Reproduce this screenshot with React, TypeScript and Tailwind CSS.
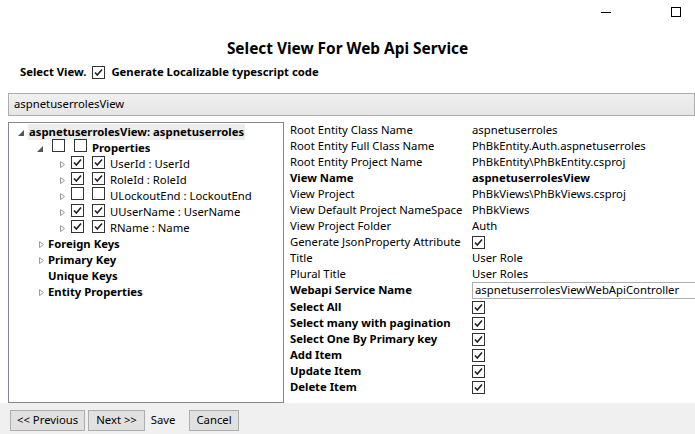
import React from 'react'

const font = { fontFamily: '"Segoe UI", "Noto Sans", sans-serif' }

function Check({ checked }: { checked: boolean }) {
  return (
    <span className="inline-flex w-[13px] h-[13px] border border-[#333] bg-white items-center justify-center shrink-0">
      {checked && (
        <svg width="11" height="11" viewBox="0 0 11 11">
          <path d="M2 5.5 L4.3 8 L9 2.5" fill="none" stroke="#222" strokeWidth="1.6" />
        </svg>
      )}
    </span>
  )
}

function Expander({ open }: { open?: boolean }) {
  return (
    <svg width="9" height="9" viewBox="0 0 9 9" className="shrink-0">
      {open ? (
        <polygon points="7,2 7,8 1,8" fill="#555" />
      ) : (
        <polygon points="2.5,1.5 6.5,4.5 2.5,7.5" fill="white" stroke="#9a9a9a" strokeWidth="1" />
      )}
    </svg>
  )
}

const children = [
  { name: 'UserId : UserId', on: true },
  { name: 'RoleId : RoleId', on: true },
  { name: 'ULockoutEnd : LockoutEnd', on: false },
  { name: 'UUserName : UserName', on: true },
  { name: 'RName : Name', on: true },
]

const props: { label: string; value?: string; bold?: boolean; check?: boolean }[] = [
  { label: 'Root Entity Class Name', value: 'aspnetuserroles' },
  { label: 'Root Entity Full Class Name', value: 'PhBkEntity.Auth.aspnetuserroles' },
  { label: 'Root Entity Project Name', value: 'PhBkEntity\\PhBkEntity.csproj' },
  { label: 'View Name', value: 'aspnetuserrolesView', bold: true },
  { label: 'View Project', value: 'PhBkViews\\PhBkViews.csproj' },
  { label: 'View Default Project NameSpace', value: 'PhBkViews' },
  { label: 'View Project Folder', value: 'Auth' },
  { label: 'Generate JsonProperty Attribute', check: true },
  { label: 'Title', value: 'User Role' },
  { label: 'Plural Title', value: 'User Roles' },
]

const actions = [
  'Select All',
  'Select many with pagination',
  'Select One By Primary key',
  'Add Item',
  'Update Item',
  'Delete Item',
]

export default function App() {
  return (
    <div style={font} className="w-[695px] h-[434px] bg-white text-[11.3px] text-black overflow-hidden flex flex-col">
      {/* window caption */}
      <div className="h-[28px] flex justify-end items-start shrink-0">
        <div className="w-[10px] h-[1px] bg-black mr-[60px] mt-[12px]" />
        <div className="w-[10px] h-[10px] border border-black mr-[14px] mt-[7px]" />
      </div>

      <div className="h-[40px] flex items-center justify-center font-bold text-[15.4px] shrink-0 pt-[1px]">
        Select View For Web Api Service
      </div>

      <div className="h-[24px] flex items-center gap-[6px] pl-[20px] font-bold shrink-0 mt-[-8px]">
        <span>Select View.</span>
        <Check checked />
        <span>Generate Localizable typescript code</span>
      </div>

      <div className="mt-[9px] ml-[8px] h-[23px] border border-[#acacac] bg-gradient-to-b from-[#f0f0f0] to-[#e5e5e5] flex items-center pl-[5px] shrink-0">
        aspnetuserrolesView
      </div>

      <div className="flex mt-[6px] h-[281px] shrink-0">
        {/* tree */}
        <div className="ml-[8px] w-[276px] border border-[#828790] pt-[1px] shrink-0">
          <div className="h-[16px] flex items-center pl-[8px]">
            <Expander open />
            <span className="ml-[2px] px-[1px] bg-[#ededed] font-bold leading-[16px]">aspnetuserrolesView: aspnetuserroles</span>
          </div>
          <div className="h-[16px] flex items-center pl-[27px]">
            <Expander open />
            <span className="ml-[7px]"><Check checked={false} /></span>
            <span className="ml-[9px]"><Check checked={false} /></span>
            <span className="ml-[5px] font-bold">Properties</span>
          </div>
          {children.map((c) => (
            <div key={c.name} className="h-[16px] flex items-center pl-[49px]">
              <Expander />
              <span className="ml-[4px]"><Check checked={c.on} /></span>
              <span className="ml-[8px]"><Check checked={c.on} /></span>
              <span className="ml-[5px]">{c.name}</span>
            </div>
          ))}
          {['Foreign Keys', 'Primary Key', 'Unique Keys', 'Entity Properties'].map((t) => (
            <div key={t} className="h-[16px] flex items-center pl-[28px]">
              {t === 'Unique Keys' ? <span className="w-[9px]" /> : <Expander />}
              <span className="ml-[2px] font-bold">{t}</span>
            </div>
          ))}
        </div>

        {/* properties */}
        <div className="ml-[6px] flex-1 min-w-0">
          {props.map((p) => (
            <div key={p.label} className="h-[16px] flex items-center">
              <span className={`w-[182px] shrink-0 whitespace-nowrap ${p.bold ? 'font-bold' : ''}`}>{p.label}</span>
              {p.check ? (
                <Check checked />
              ) : (
                <span className={`whitespace-nowrap ${p.bold ? 'font-bold' : ''}`}>{p.value}</span>
              )}
            </div>
          ))}
          <div className="h-[17px] flex items-center">
            <span className="w-[182px] shrink-0 font-bold">Webapi Service Name</span>
            <div className="flex-1 h-[17px] border border-[#abadb3] border-r-0 flex items-center pl-[2px] whitespace-nowrap">
              aspnetuserrolesViewWebApiController
            </div>
          </div>
          {actions.map((a) => (
            <div key={a} className="h-[16px] flex items-center">
              <span className="w-[182px] shrink-0 font-bold">{a}</span>
              <Check checked />
            </div>
          ))}
        </div>
      </div>

      {/* bottom buttons */}
      <div className="flex-1 bg-[#f0f0f0] flex items-start pt-[7px] pl-[10px] gap-[3px]">
        <button className="h-[21px] px-[6px] bg-[#e1e1e1] border border-[#adadad] flex items-center">&lt;&lt; Previous</button>
        <button className="h-[21px] px-[7px] bg-[#e1e1e1] border border-[#adadad] flex items-center">Next &gt;&gt;</button>
        <span className="h-[21px] flex items-center ml-[3px] mr-[11px]">Save</span>
        <button className="h-[21px] px-[6px] bg-[#e1e1e1] border border-[#adadad] flex items-center">Cancel</button>
      </div>
    </div>
  )
}
